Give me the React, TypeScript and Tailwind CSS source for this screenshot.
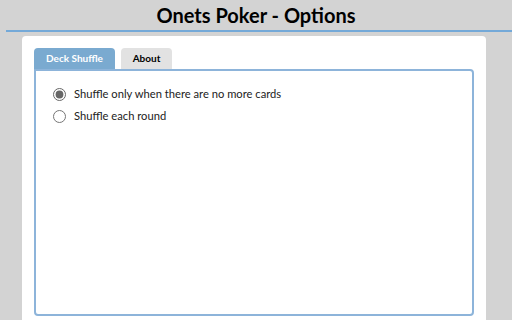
import { useState } from "react";

export default function App() {
  const [tab, setTab] = useState("deck");
  const [mode, setMode] = useState("empty");

  return (
    <div className="h-[320px] w-[512px] overflow-hidden bg-[#d3d3d3] font-['Lato',sans-serif]">
      {/* Header */}
      <div className="flex h-[30px] items-center justify-center">
        <h1 className="text-[20px] font-bold leading-none text-black">
          Onets Poker - Options
        </h1>
      </div>
      <div className="ml-[6px] h-[2px] bg-[#74a9d8]" />

      {/* Panel */}
      <div className="ml-[22px] mt-[4px] w-[464px] h-[300px] rounded-t-[4px] bg-white px-[12px] pt-[12px]">
        <div className="flex gap-[6px]">
          <button
            onClick={() => setTab("deck")}
            className={
              tab === "deck"
                ? "h-[21px] w-[81px] rounded-t-[4px] bg-[#7aaad0] text-[10px] font-bold text-white"
                : "h-[21px] w-[81px] rounded-t-[4px] bg-[#e2e2e2] text-[10px] font-bold text-black"
            }
          >
            Deck Shuffle
          </button>
          <button
            onClick={() => setTab("about")}
            className={
              tab === "about"
                ? "h-[21px] w-[51px] rounded-t-[4px] bg-[#7aaad0] text-[10px] font-bold text-white"
                : "h-[21px] w-[51px] rounded-t-[4px] bg-[#e2e2e2] text-[10px] font-bold text-black"
            }
          >
            About
          </button>
        </div>

        <div className="h-[247px] w-[440px] rounded-b-[4px] rounded-tr-[4px] border-2 border-[#8db4da] px-[17px] pt-[15px]">
          {tab === "deck" ? (
            <div className="flex flex-col gap-[5px] text-[11.2px] text-[#222]">
              <label className="flex items-center gap-[8px]">
                <input
                  type="radio"
                  name="mode"
                  checked={mode === "empty"}
                  onChange={() => setMode("empty")}
                  className="m-0 h-[13px] w-[13px] accent-[#666]"
                />
                Shuffle only when there are no more cards
              </label>
              <label className="flex items-center gap-[8px]">
                <input
                  type="radio"
                  name="mode"
                  checked={mode === "round"}
                  onChange={() => setMode("round")}
                  className="m-0 h-[13px] w-[13px] accent-[#666]"
                />
                Shuffle each round
              </label>
            </div>
          ) : (
            <p className="text-[11.2px] text-[#222]">Onets Poker</p>
          )}
        </div>
      </div>
    </div>
  );
}
